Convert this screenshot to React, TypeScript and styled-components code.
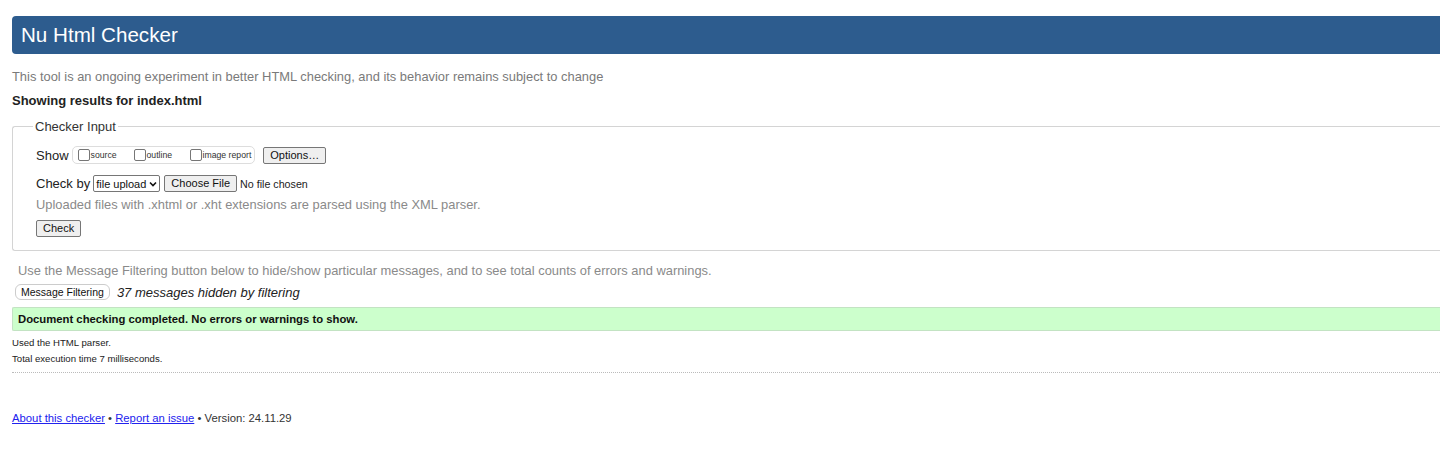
import * as React from "react";
import styled, { createGlobalStyle } from "styled-components";

const GlobalStyle = createGlobalStyle`
  html, body {
    margin: 0;
    padding: 0;
    overflow: hidden;
    background: #ffffff;
  }
  body {
    font-family: "Liberation Sans", Arial, sans-serif;
    color: #222;
  }
`;

const Page = styled.div`
  padding: 16px 0 0 12px;
  margin-right: -12px;
`;

const Header = styled.h1`
  margin: 0;
  height: 38px;
  display: flex;
  align-items: center;
  padding: 0 9px;
  background: #2d5c8e;
  color: #fff;
  font-size: 20.6px;
  font-weight: normal;
  border-radius: 4px;
`;

const Intro = styled.p`
  margin: 15px 0 0;
  font-size: 12.9px;
  color: #7a7a7a;
`;

const Showing = styled.p`
  margin: 9px 0 0;
  font-size: 13px;
  font-weight: bold;
  color: #222;
`;

const Fieldset = styled.fieldset`
  margin: 11px 0 0;
  padding: 12px 23px 13px;
  border: 1px solid #d4d4d4;
  border-right: none;
  border-radius: 3px 0 0 3px;
`;

const Legend = styled.legend`
  margin-left: -3px;
  padding: 0 2px;
  font-size: 13px;
  color: #333;
`;

const Row = styled.div<{ gapBelow: number }>`
  display: flex;
  align-items: center;
  font-size: 13px;
  color: #222;
  margin-bottom: ${(p) => p.gapBelow}px;
`;

const Label = styled.span`
  margin-right: 3px;
`;

const ShowGroup = styled.span`
  display: inline-flex;
  align-items: center;
  height: 16px;
  padding: 0 3px 0 5px;
  border: 1px solid #ddd;
  border-radius: 5px;
  margin-right: 8px;
`;

const ShowOption = styled.label<{ w?: number }>`
  display: inline-flex;
  align-items: center;
  font-size: 8.7px;
  color: #333;
  width: ${(p) => (p.w ? `${p.w}px` : "auto")};
`;

const Box = styled.span`
  display: inline-block;
  width: 10px;
  height: 10px;
  border: 1px solid #767676;
  border-radius: 2px;
  margin-right: 1px;
  background: #fff;
`;

const Button = styled.button<{ rounded?: boolean }>`
  font-family: "Liberation Sans", Arial, sans-serif;
  font-size: ${(p) => (p.rounded ? "10.5px" : "11px")};
  color: #111;
  background: ${(p) => (p.rounded ? "#fff" : "#efefef")};
  border: 1px solid ${(p) => (p.rounded ? "#ccc" : "#767676")};
  border-radius: ${(p) => (p.rounded ? "6px" : "2px")};
  padding: ${(p) => (p.rounded ? "1px 5px" : "1px 6px")};
  height: ${(p) => (p.rounded ? "16px" : "17px")};
  line-height: 13px;
`;

const Select = styled.span`
  display: inline-flex;
  align-items: center;
  gap: 3px;
  height: 15px;
  padding: 0 2px 0 2px;
  border: 1px solid #767676;
  border-radius: 2px;
  font-size: 11px;
  color: #111;
  margin-right: 4px;
  background: #fff;
`;

const Muted = styled.div`
  font-size: 12.9px;
  color: #8a8a8a;
  margin: -1px 0 6px;
`;

const FileName = styled.span`
  font-size: 10.7px;
  margin-left: 3px;
`;

const FilterHint = styled.p`
  margin: 12px 0 0 6px;
  font-size: 12.9px;
  color: #8a8a8a;
`;

const FilterRow = styled.div`
  display: flex;
  align-items: center;
  gap: 7px;
  margin: 6px 0 0 3px;
`;

const Hidden = styled.em`
  font-size: 13px;
  color: #222;
`;

const Success = styled.div`
  margin-top: 7px;
  height: 22px;
  display: flex;
  align-items: center;
  padding-left: 5px;
  background: #ccffcc;
  border: 1px solid #c3e3c3;
  border-right: none;
  border-radius: 2px 0 0 2px;
  font-size: 11.3px;
  font-weight: bold;
  color: #111;
`;

const Stats = styled.p<{ top: number }>`
  margin: ${(p) => p.top}px 0 0;
  font-size: 9.6px;
  color: #222;
`;

const Rule = styled.hr`
  margin: 8px 0 0;
  border: none;
  border-top: 1px dotted #bbb;
`;

const Footer = styled.p`
  margin: 39px 0 0;
  font-size: 11.3px;
  color: #333;
`;

const Link = styled.a`
  color: #2222ee;
`;

export default function App() {
  return (
    <Page>
      <GlobalStyle />
      <Header>Nu Html Checker</Header>
      <Intro>
        This tool is an ongoing experiment in better HTML checking, and its
        behavior remains subject to change
      </Intro>
      <Showing>Showing results for index.html</Showing>
      <Fieldset>
        <Legend>Checker Input</Legend>
        <Row gapBelow={11}>
          <Label>Show</Label>
          <ShowGroup>
            <ShowOption w={56}>
              <Box />
              source
            </ShowOption>
            <ShowOption w={56}>
              <Box />
              outline
            </ShowOption>
            <ShowOption>
              <Box />
              image report
            </ShowOption>
          </ShowGroup>
          <Button>Options…</Button>
        </Row>
        <Row gapBelow={6}>
          <Label>Check by</Label>
          <Select>
            file upload
            <svg width="8" height="6" viewBox="0 0 8 6">
              <path d="M1 1.5 L4 4.5 L7 1.5" fill="none" stroke="#111" strokeWidth="1.6" />
            </svg>
          </Select>
          <Button>Choose File</Button>
          <FileName>No file chosen</FileName>
        </Row>
        <Muted>Uploaded files with .xhtml or .xht extensions are parsed using the XML parser.</Muted>
        <Button>Check</Button>
      </Fieldset>
      <FilterHint>
        Use the Message Filtering button below to hide/show particular messages,
        and to see total counts of errors and warnings.
      </FilterHint>
      <FilterRow>
        <Button rounded>Message Filtering</Button>
        <Hidden>37 messages hidden by filtering</Hidden>
      </FilterRow>
      <Success>Document checking completed. No errors or warnings to show.</Success>
      <Stats top={6}>Used the HTML parser.</Stats>
      <Stats top={5}>Total execution time 7 milliseconds.</Stats>
      <Rule />
      <Footer>
        <Link href="#">About this checker</Link> •{" "}
        <Link href="#">Report an issue</Link> • Version: 24.11.29
      </Footer>
    </Page>
  );
}
